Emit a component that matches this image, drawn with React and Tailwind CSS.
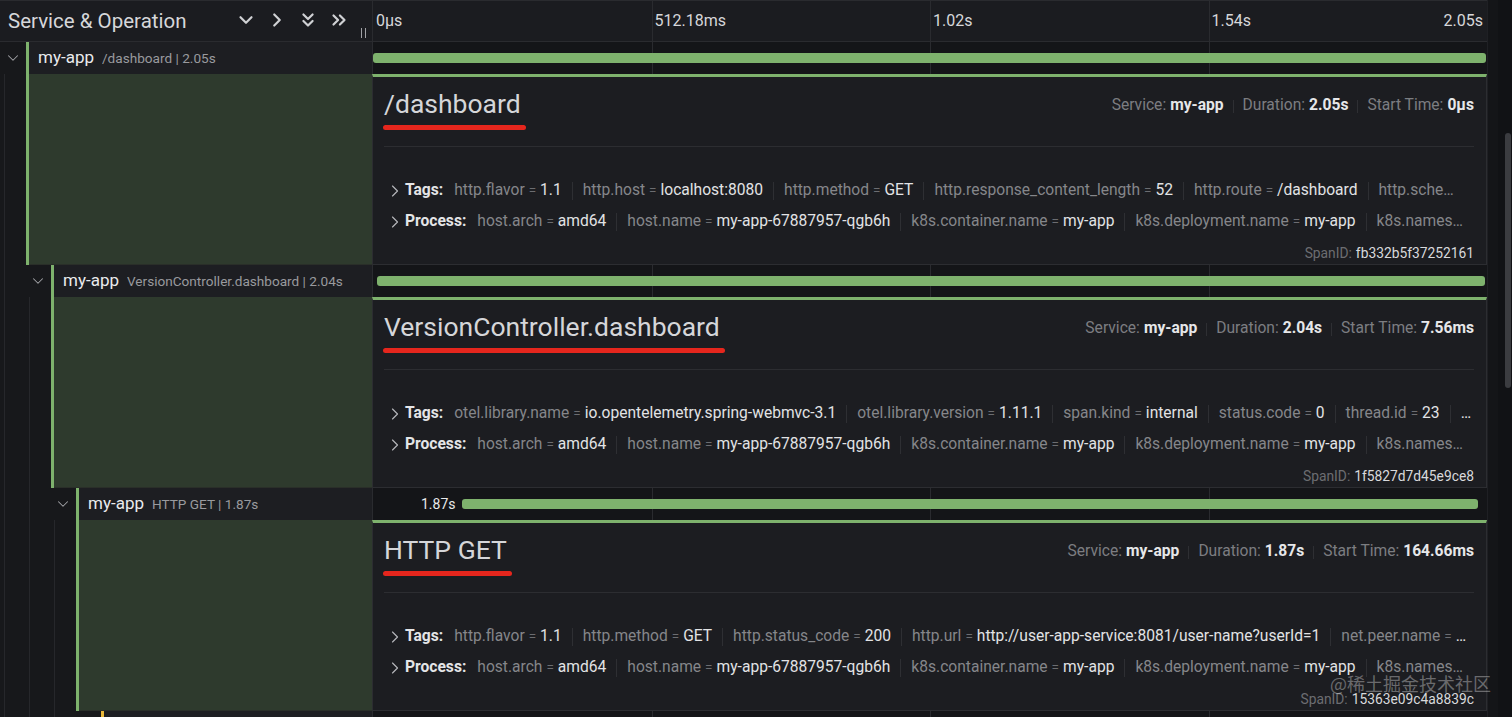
import React from 'react';
import { ChevronDown, ChevronRight, ChevronsDown, ChevronsRight } from 'lucide-react';

const TOTAL_MS = 2050;

const processKV = [
  ['host.arch', 'amd64'],
  ['host.name', 'my-app-67887957-qgb6h'],
  ['k8s.container.name', 'my-app'],
  ['k8s.deployment.name', 'my-app'],
  ['k8s.names…', null],
];

const spans = [
  {
    depth: 0,
    op: '/dashboard',
    dur: '2.05s',
    startMs: 0,
    durMs: 2050,
    start: '0μs',
    spanId: 'fb332b5f37252161',
    tags: [
      ['http.flavor', '1.1'],
      ['http.host', 'localhost:8080'],
      ['http.method', 'GET'],
      ['http.response_content_length', '52'],
      ['http.route', '/dashboard'],
      ['http.sche…', null],
    ],
  },
  {
    depth: 1,
    op: 'VersionController.dashboard',
    dur: '2.04s',
    startMs: 7.56,
    durMs: 2040,
    start: '7.56ms',
    spanId: '1f5827d7d45e9ce8',
    tags: [
      ['otel.library.name', 'io.opentelemetry.spring-webmvc-3.1'],
      ['otel.library.version', '1.11.1'],
      ['span.kind', 'internal'],
      ['status.code', '0'],
      ['thread.id', '23'],
      [null, '…'],
    ],
  },
  {
    depth: 2,
    op: 'HTTP GET',
    dur: '1.87s',
    startMs: 164.66,
    durMs: 1870,
    start: '164.66ms',
    spanId: '15363e09c4a8839c',
    showLabel: true,
    tags: [
      ['http.flavor', '1.1'],
      ['http.method', 'GET'],
      ['http.status_code', '200'],
      ['http.url', 'http://user-app-service:8081/user-name?userId=1', true],
      ['net.peer.name', '…'],
    ],
  },
];

// next span, only the top edge of its row shows
const nextSpan = { depth: 3, startMs: 170, durMs: 1800, color: 'yellow', hidden: true };

const Guides = ({ n }) =>
  Array.from({ length: n }).map((_, i) => (
    <div key={i} className="h-full w-[25px] shrink-0 pl-[4px]">
      <div className="h-full w-px bg-[#26272b]" />
    </div>
  ));

const Ticks = () => (
  <>
    <div className="absolute top-0 bottom-0 left-[25%] w-px bg-[#2a2b2f]" />
    <div className="absolute top-0 bottom-0 left-[50%] w-px bg-[#2a2b2f]" />
    <div className="absolute top-0 bottom-0 left-[75%] w-px bg-[#2a2b2f]" />
  </>
);

const Sep = ({ h = 'h-[18px]', mx = 'mx-[10px]' }) => <span className={`${h} ${mx} w-px shrink-0 bg-[#2e2f33]`} />;

const KV = ({ k, v, mark }) => (
  <span className="relative shrink-0 whitespace-nowrap">
    {k && <span className="text-[#85868a]">{k}</span>}
    {k && v && <span className="mx-[4px] text-[13.5px] text-[#6c6d71]">=</span>}
    {v && <span className="text-[#e2e3e5]">{v}</span>}
    {mark && <span className="absolute left-0 -right-[6px] -bottom-[8px] h-[4px] rounded-full bg-[#e5261d]" />}
  </span>
);

const KVRow = ({ label, items }) => (
  <div className="flex h-[31px] items-center overflow-hidden whitespace-nowrap text-[15.6px]">
    <ChevronRight size={20} strokeWidth={1.4} className="ml-[1px] shrink-0 text-[#b5b6ba]" />
    <span className="mr-[11px] shrink-0 font-bold text-[#e4e5e7]">{label}</span>
    {items.map((it, i) => (
      <React.Fragment key={i}>
        {i > 0 && <Sep />}
        <KV k={it[0]} v={it[1]} mark={it[2]} />
      </React.Fragment>
    ))}
  </div>
);

const Header = () => (
  <div className="flex h-[42px] shrink-0 border-t border-b border-[#2a2b2f] bg-[#1b1c20]">
    <div className="relative flex w-[372px] shrink-0 items-center pl-[8px] pr-[22px]">
      <span className="text-[20.5px] text-[#d6d7da]">Service &amp; Operation</span>
      <div className="ml-auto flex items-center gap-[9px] pb-[3px] text-[#d0d1d4]">
        <ChevronDown size={22} strokeWidth={2.4} />
        <ChevronRight size={22} strokeWidth={2.4} />
        <ChevronsDown size={22} strokeWidth={2.4} />
        <ChevronsRight size={22} strokeWidth={2.4} />
      </div>
      <div className="absolute right-[6px] bottom-[3px] flex h-[10px] gap-[3px]">
        <div className="h-full w-px bg-[#a0a1a5]" />
        <div className="h-full w-px bg-[#a0a1a5]" />
      </div>
    </div>
    <div className="relative flex-1 border-l border-[#2a2b2f] text-[16px] leading-[20px] text-[#d6d7da]">
      <Ticks />
      <span className="absolute left-[3px] top-[10px]">0μs</span>
      <span className="absolute left-[calc(25%+3px)] top-[10px]">512.18ms</span>
      <span className="absolute left-[calc(50%+3px)] top-[10px]">1.02s</span>
      <span className="absolute left-[calc(75%+3px)] top-[10px]">1.54s</span>
      <span className="absolute right-[4px] top-[10px]">2.05s</span>
    </div>
  </div>
);

const SpanRow = ({ s }) => {
  const left = (s.startMs / TOTAL_MS) * 100;
  const width = (s.durMs / TOTAL_MS) * 100;
  const barColor = s.color === 'yellow' ? 'bg-[#eab839]' : 'bg-[#7eb26d]';
  return (
    <div className="flex h-[32px] shrink-0">
      <div className="flex h-full w-[372px] shrink-0">
        <Guides n={s.depth} />
        <div className="flex w-[26px] shrink-0 items-center justify-center">
          {!s.hidden && <ChevronDown size={18} strokeWidth={1.4} className="text-[#a3a4a8]" />}
        </div>
        <div className={`h-full w-[3px] shrink-0 ${barColor}`} />
        <div className="flex min-w-0 flex-1 items-center gap-[8px] bg-[#1d1e22] pl-[9px]">
          {!s.hidden && (
            <>
              <span className="shrink-0 text-[17px] text-[#eaebed]">my-app</span>
              <span className="truncate text-[13.6px] text-[#999a9e]">
                {s.op} | {s.dur}
              </span>
            </>
          )}
        </div>
      </div>
      <div className="relative min-w-0 flex-1 border-l border-[#2a2b2f] bg-[#141518]">
        <Ticks />
        <div
          className={`absolute top-[11px] h-[10px] rounded-[3px] ${barColor}`}
          style={{ left: `${left}%`, width: `calc(${width}% - 1px)` }}
        />
        {s.showLabel && (
          <span
            className="absolute top-[8px] text-[14px] leading-[16px] text-[#e8e9eb]"
            style={{ right: `calc(${100 - left}% + 7px)` }}
          >
            {s.dur}
          </span>
        )}
      </div>
    </div>
  );
};

const DetailRow = ({ s }) => (
  <div className="flex h-[191px] shrink-0">
    <div className="flex h-full w-[372px] shrink-0">
      <Guides n={s.depth} />
      <div className="h-full w-[26px] shrink-0 pl-[4px]">
        <div className="h-full w-px bg-[#26272b]" />
      </div>
      <div className="h-full w-[3px] shrink-0 bg-[#7eb26d]" />
      <div className="h-full flex-1 border-b border-[#2a2f29] bg-[#2e3a2d]" />
    </div>
    <div className="flex min-w-0 flex-1 flex-col overflow-hidden border-t-[3px] border-r border-b border-l border-t-[#7eb26d] border-r-[#2c2d31] border-b-[#2c2d31] border-l-[#2c2d31] bg-[#1c1d21] pl-[11px] pr-[12px]">
      <div className="flex h-[69px] shrink-0 items-start justify-between pt-[11px]">
        <span className="relative text-[26.5px] leading-[32px] text-[#d5d6d9]">
          {s.op}
          <span className="absolute -left-[1px] -right-[5px] -bottom-[10px] h-[5px] rounded-full bg-[#e5261d]" />
        </span>
        <div className="mt-[2px] flex h-[32px] items-center text-[15.6px]">
          <span className="text-[#7c7d81]">Service:</span>
          <span className="ml-[4px] font-bold text-[#e6e7e9]">my-app</span>
          <Sep h="h-[13px]" mx="mx-[9px]" />
          <span className="text-[#7c7d81]">Duration:</span>
          <span className="ml-[4px] font-bold text-[#e6e7e9]">{s.dur}</span>
          <Sep h="h-[13px]" mx="mx-[9px]" />
          <span className="text-[#7c7d81]">Start Time:</span>
          <span className="ml-[4px] font-bold text-[#e6e7e9]">{s.start}</span>
        </div>
      </div>
      <div className="h-px shrink-0 bg-[#2c2d31]" />
      <div className="mt-[28px]">
        <KVRow label="Tags:" items={s.tags} />
        <KVRow label="Process:" items={processKV} />
      </div>
      <div className="mt-[8px] flex justify-end text-[13.8px] leading-[16px]">
        <span className="text-[#6c6d71]">SpanID:</span>
        <span className="ml-[4px] text-[#d8d9dc]">{s.spanId}</span>
      </div>
    </div>
  </div>
);

const Scrollbar = () => (
  <div className="flex w-[25px] shrink-0 border-l border-[#1f2024] bg-[#141518] pl-[10px]">
    <div className="flex h-full flex-1 flex-col items-end bg-[#111215] pt-[133px] pr-[1px]">
      <div className="h-[255px] w-[6px] rounded-full bg-[#3b3c40]" />
    </div>
  </div>
);

export default function App() {
  return (
    <div className="relative flex h-[717px] w-[1512px] overflow-hidden bg-[#17181b] font-[Roboto,sans-serif]">
      <div className="flex w-[1487px] shrink-0 flex-col">
        <Header />
        {spans.map((s) => (
          <React.Fragment key={s.spanId}>
            <SpanRow s={s} />
            <DetailRow s={s} />
          </React.Fragment>
        ))}
        <SpanRow s={nextSpan} />
      </div>
      <Scrollbar />
      <div className="pointer-events-none absolute left-[1330px] top-[671px] font-['Noto_Sans_CJK_SC',sans-serif] text-[18px] leading-[24px] text-white/35">
        @稀土掘金技术社区
      </div>
    </div>
  );
}
